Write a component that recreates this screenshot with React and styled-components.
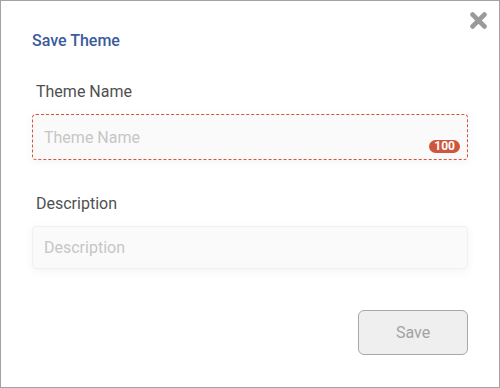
import React from "react";
import styled, { createGlobalStyle } from "styled-components";

const GlobalStyle = createGlobalStyle`
  html, body { margin: 0; padding: 0; background: #ffffff; }
  body { font-family: Roboto, "Liberation Sans", sans-serif; }
  * { box-sizing: border-box; }
`;

const Dialog = styled.div`
  position: relative;
  width: 500px;
  height: 388px;
  border: 1px solid #a3a3a3;
  background: #ffffff;
  padding: 30px 31px 32px 31px;
  display: flex;
  flex-direction: column;
`;

const Title = styled.h2`
  margin: 0;
  font-size: 16px;
  line-height: 19px;
  font-weight: 500;
  color: #3b5b9c;
`;

const CloseButton = styled.button`
  position: absolute;
  top: 11px;
  right: 12px;
  width: 17px;
  height: 17px;
  padding: 0;
  border: none;
  background: transparent;
  cursor: pointer;
  display: flex;
`;

const Field = styled.div`
  display: flex;
  flex-direction: column;
  gap: 12px;
  margin-top: ${(p) => p.$top}px;
`;

const Label = styled.label`
  padding-left: 4px;
  font-size: 16px;
  line-height: 20px;
  color: #505050;
`;

const InputWrap = styled.div`
  position: relative;
`;

const TextInput = styled.input`
  display: block;
  width: 100%;
  height: ${(p) => p.$h}px;
  padding: 0 11px;
  font-family: Roboto, "Liberation Sans", sans-serif;
  font-size: 16px;
  color: #444;
  background: #fafafa;
  border: 1px ${(p) => (p.$invalid ? "dashed #d4553c" : "solid #f1f1f1")};
  border-radius: 4px;
  box-shadow: 0 2px 10px rgba(0, 0, 0, 0.05);
  outline: none;
  &::placeholder { color: #c6c6c6; }
`;

const Counter = styled.span`
  position: absolute;
  right: 8px;
  bottom: 7px;
  height: 13px;
  padding: 0 5px;
  border-radius: 7px;
  background: #cf563c;
  color: #ffffff;
  font-size: 12px;
  font-weight: 700;
  line-height: 13px;
`;

const Footer = styled.div`
  margin-top: auto;
  display: flex;
  justify-content: flex-end;
`;

const SaveButton = styled.button`
  width: 110px;
  height: 45px;
  border: 1px solid #a8a8a8;
  border-radius: 6px;
  background: #efefef;
  color: #a2a2a2;
  font-family: Roboto, "Liberation Sans", sans-serif;
  font-size: 16px;
  cursor: default;
`;

function CloseIcon() {
  return (
    <svg width="17" height="17" viewBox="0 0 17 17">
      <g stroke="#9a9a9a" strokeWidth="4.8" strokeLinecap="round">
        <line x1="2.6" y1="2.6" x2="14.4" y2="14.4" />
        <line x1="14.4" y1="2.6" x2="2.6" y2="14.4" />
      </g>
    </svg>
  );
}

export default function App() {
  return (
    <>
      <GlobalStyle />
      <Dialog>
        <Title>Save Theme</Title>
        <CloseButton aria-label="Close">
          <CloseIcon />
        </CloseButton>
        <Field $top={32}>
          <Label>Theme Name</Label>
          <InputWrap>
            <TextInput $h={46} $invalid placeholder="Theme Name" />
            <Counter>100</Counter>
          </InputWrap>
        </Field>
        <Field $top={34}>
          <Label>Description</Label>
          <InputWrap>
            <TextInput $h={43} placeholder="Description" />
          </InputWrap>
        </Field>
        <Footer>
          <SaveButton disabled>Save</SaveButton>
        </Footer>
      </Dialog>
    </>
  );
}
